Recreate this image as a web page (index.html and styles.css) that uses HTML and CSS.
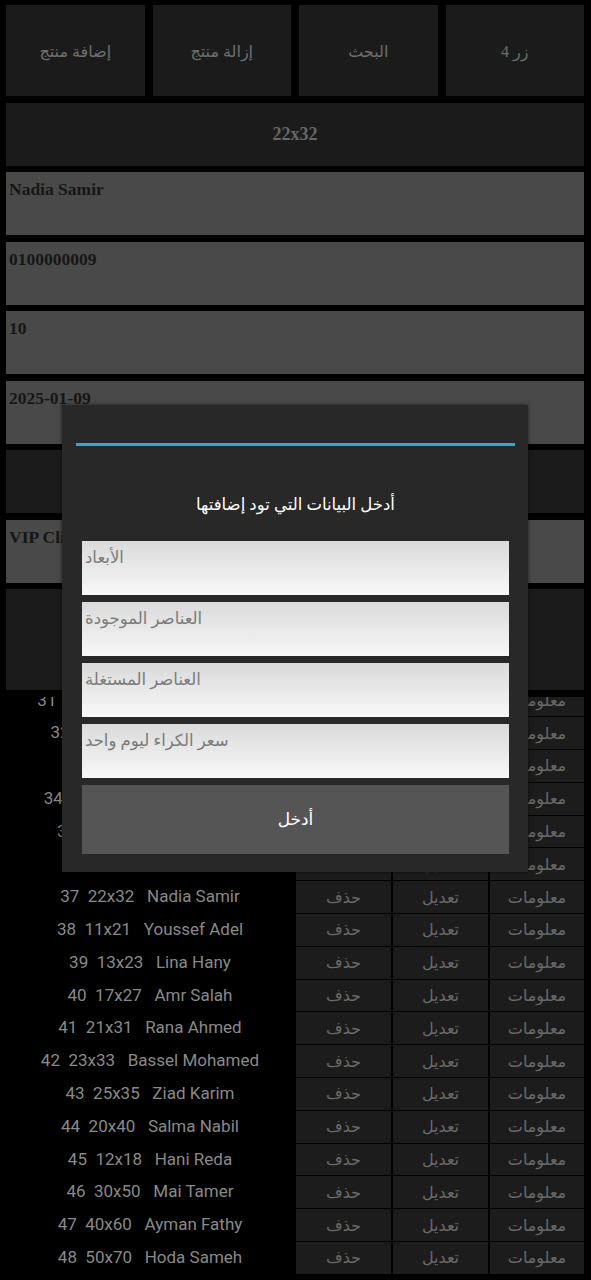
FILE: index.html
```html
<!DOCTYPE html>
<html lang="ar">
<head>
<meta charset="utf-8">
<title>Products</title>
<link rel="stylesheet" href="styles.css">
</head>
<body>
<div class="app">
  <div class="top-row">
    <div class="btn">إضافة منتج</div>
    <div class="btn">إزالة منتج</div>
    <div class="btn">البحث</div>
    <div class="btn">زر 4</div>
  </div>
  <div class="btn wide latin">22x32</div>
  <div class="field">Nadia Samir</div>
  <div class="field">0100000009</div>
  <div class="field">10</div>
  <div class="field">2025-01-09</div>
  <div class="btn wide">حفظ</div>
  <div class="field">VIP Client</div>
  <div class="btn tall">عرض</div>
  <div class="list">
    <div class="list-inner">
      <div class="row"><div class="row-text">31  15x25   Mohamed Hassan</div><div class="cell">حذف</div><div class="cell">تعديل</div><div class="cell">معلومات</div></div>
      <div class="row"><div class="row-text">32  18x28   Karim Mostafa</div><div class="cell">حذف</div><div class="cell">تعديل</div><div class="cell">معلومات</div></div>
      <div class="row"><div class="row-text">33  14x24   Omar Farid</div><div class="cell">حذف</div><div class="cell">تعديل</div><div class="cell">معلومات</div></div>
      <div class="row"><div class="row-text">34  16x26   Sherif Mahmoud</div><div class="cell">حذف</div><div class="cell">تعديل</div><div class="cell">معلومات</div></div>
      <div class="row"><div class="row-text">35  19x29   Dina Youssef</div><div class="cell">حذف</div><div class="cell">تعديل</div><div class="cell">معلومات</div></div>
      <div class="row"><div class="row-text">36  24x34   Mona Ali</div><div class="cell">حذف</div><div class="cell">تعديل</div><div class="cell">معلومات</div></div>
      <div class="row"><div class="row-text">37  22x32   Nadia Samir</div><div class="cell">حذف</div><div class="cell">تعديل</div><div class="cell">معلومات</div></div>
      <div class="row"><div class="row-text">38  11x21   Youssef Adel</div><div class="cell">حذف</div><div class="cell">تعديل</div><div class="cell">معلومات</div></div>
      <div class="row"><div class="row-text">39  13x23   Lina Hany</div><div class="cell">حذف</div><div class="cell">تعديل</div><div class="cell">معلومات</div></div>
      <div class="row"><div class="row-text">40  17x27   Amr Salah</div><div class="cell">حذف</div><div class="cell">تعديل</div><div class="cell">معلومات</div></div>
      <div class="row"><div class="row-text">41  21x31   Rana Ahmed</div><div class="cell">حذف</div><div class="cell">تعديل</div><div class="cell">معلومات</div></div>
      <div class="row"><div class="row-text">42  23x33   Bassel Mohamed</div><div class="cell">حذف</div><div class="cell">تعديل</div><div class="cell">معلومات</div></div>
      <div class="row"><div class="row-text">43  25x35   Ziad Karim</div><div class="cell">حذف</div><div class="cell">تعديل</div><div class="cell">معلومات</div></div>
      <div class="row"><div class="row-text">44  20x40   Salma Nabil</div><div class="cell">حذف</div><div class="cell">تعديل</div><div class="cell">معلومات</div></div>
      <div class="row"><div class="row-text">45  12x18   Hani Reda</div><div class="cell">حذف</div><div class="cell">تعديل</div><div class="cell">معلومات</div></div>
      <div class="row"><div class="row-text">46  30x50   Mai Tamer</div><div class="cell">حذف</div><div class="cell">تعديل</div><div class="cell">معلومات</div></div>
      <div class="row"><div class="row-text">47  40x60   Ayman Fathy</div><div class="cell">حذف</div><div class="cell">تعديل</div><div class="cell">معلومات</div></div>
      <div class="row"><div class="row-text">48  50x70   Hoda Sameh</div><div class="cell">حذف</div><div class="cell">تعديل</div><div class="cell">معلومات</div></div>
    </div>
  </div>
</div>

<div class="dialog">
  <div class="dialog-line"></div>
  <div class="dialog-title">أدخل البيانات التي تود إضافتها</div>
  <div class="inputs">
    <div class="input">الأبعاد</div>
    <div class="input">العناصر الموجودة</div>
    <div class="input">العناصر المستغلة</div>
    <div class="input">سعر الكراء ليوم واحد</div>
  </div>
  <div class="submit">أدخل</div>
</div>
</body>
</html>
```

FILE: styles.css
```css
* {
  box-sizing: border-box;
}

html,
body {
  margin: 0;
  padding: 0;
  background: #000;
}

body {
  width: 591px;
  height: 1280px;
  overflow: hidden;
  position: relative;
  font-family: "Liberation Serif", "DejaVu Sans", serif;
}

.app {
  display: flex;
  flex-direction: column;
  gap: 6.5px;
  padding: 5px 7px 0 6px;
  height: 1280px;
}

.top-row {
  display: grid;
  grid-template-columns: repeat(4, 1fr);
  gap: 8px;
  height: 91px;
  flex: none;
}

.btn {
  background: #1b1b1b;
  color: #6f6f6f;
  display: flex;
  align-items: center;
  justify-content: center;
  font-size: 16px;
  padding-top: 2px;
  direction: rtl;
}

.wide {
  height: 63px;
  flex: none;
}

.latin {
  font-weight: bold;
  font-size: 18px;
  padding-top: 0;
  color: #676767;
}

.tall {
  height: 101px;
  flex: none;
}

.field {
  height: 63px;
  flex: none;
  background: #494949;
  color: #161616;
  font-weight: bold;
  font-size: 17.5px;
  line-height: 19px;
  padding: 8px 3px 0;
  white-space: nowrap;
  overflow: hidden;
}

.list {
  flex: 1;
  min-height: 0;
  overflow: hidden;
}

.list-inner {
  margin-top: -12px;
  display: flex;
  flex-direction: column;
  gap: 1px;
}

.row {
  display: grid;
  grid-template-columns: 1fr 95px 95px 94px;
  column-gap: 2px;
  height: 31.8px;
}

.row-text {
  font-family: Roboto, "Liberation Sans", sans-serif;
  font-size: 17px;
  color: #898989;
  text-align: center;
  white-space: pre;
  line-height: 31.8px;
}

.cell {
  background: #1c1c1c;
  color: #6a6a6a;
  font-size: 16px;
  display: flex;
  align-items: center;
  justify-content: center;
}

.dialog {
  position: absolute;
  left: 62px;
  top: 405px;
  width: 466px;
  height: 467px;
  background: #282828;
  padding: 38px 19px 18px 20px;
  box-shadow: 0 0 4px rgba(0, 0, 0, 0.6);
}

.dialog-line {
  height: 3px;
  background: #33a8d8;
  margin: 0 -6px;
}

.dialog-title {
  margin: 47px 0 24px;
  height: 24px;
  line-height: 24px;
  text-align: center;
  color: #fff;
  font-size: 16.5px;
  direction: rtl;
}

.inputs {
  display: flex;
  flex-direction: column;
  gap: 7px;
}

.input {
  height: 54px;
  background: linear-gradient(#dadada, #f8f8f8);
  color: #7b7b7b;
  font-size: 16.5px;
  line-height: 22px;
  padding: 6px 3px 4px;
  text-align: left;
}

.submit {
  height: 69px;
  margin-top: 7px;
  background: #555;
  color: #fff;
  display: flex;
  align-items: center;
  justify-content: center;
  font-size: 17px;
}
```
